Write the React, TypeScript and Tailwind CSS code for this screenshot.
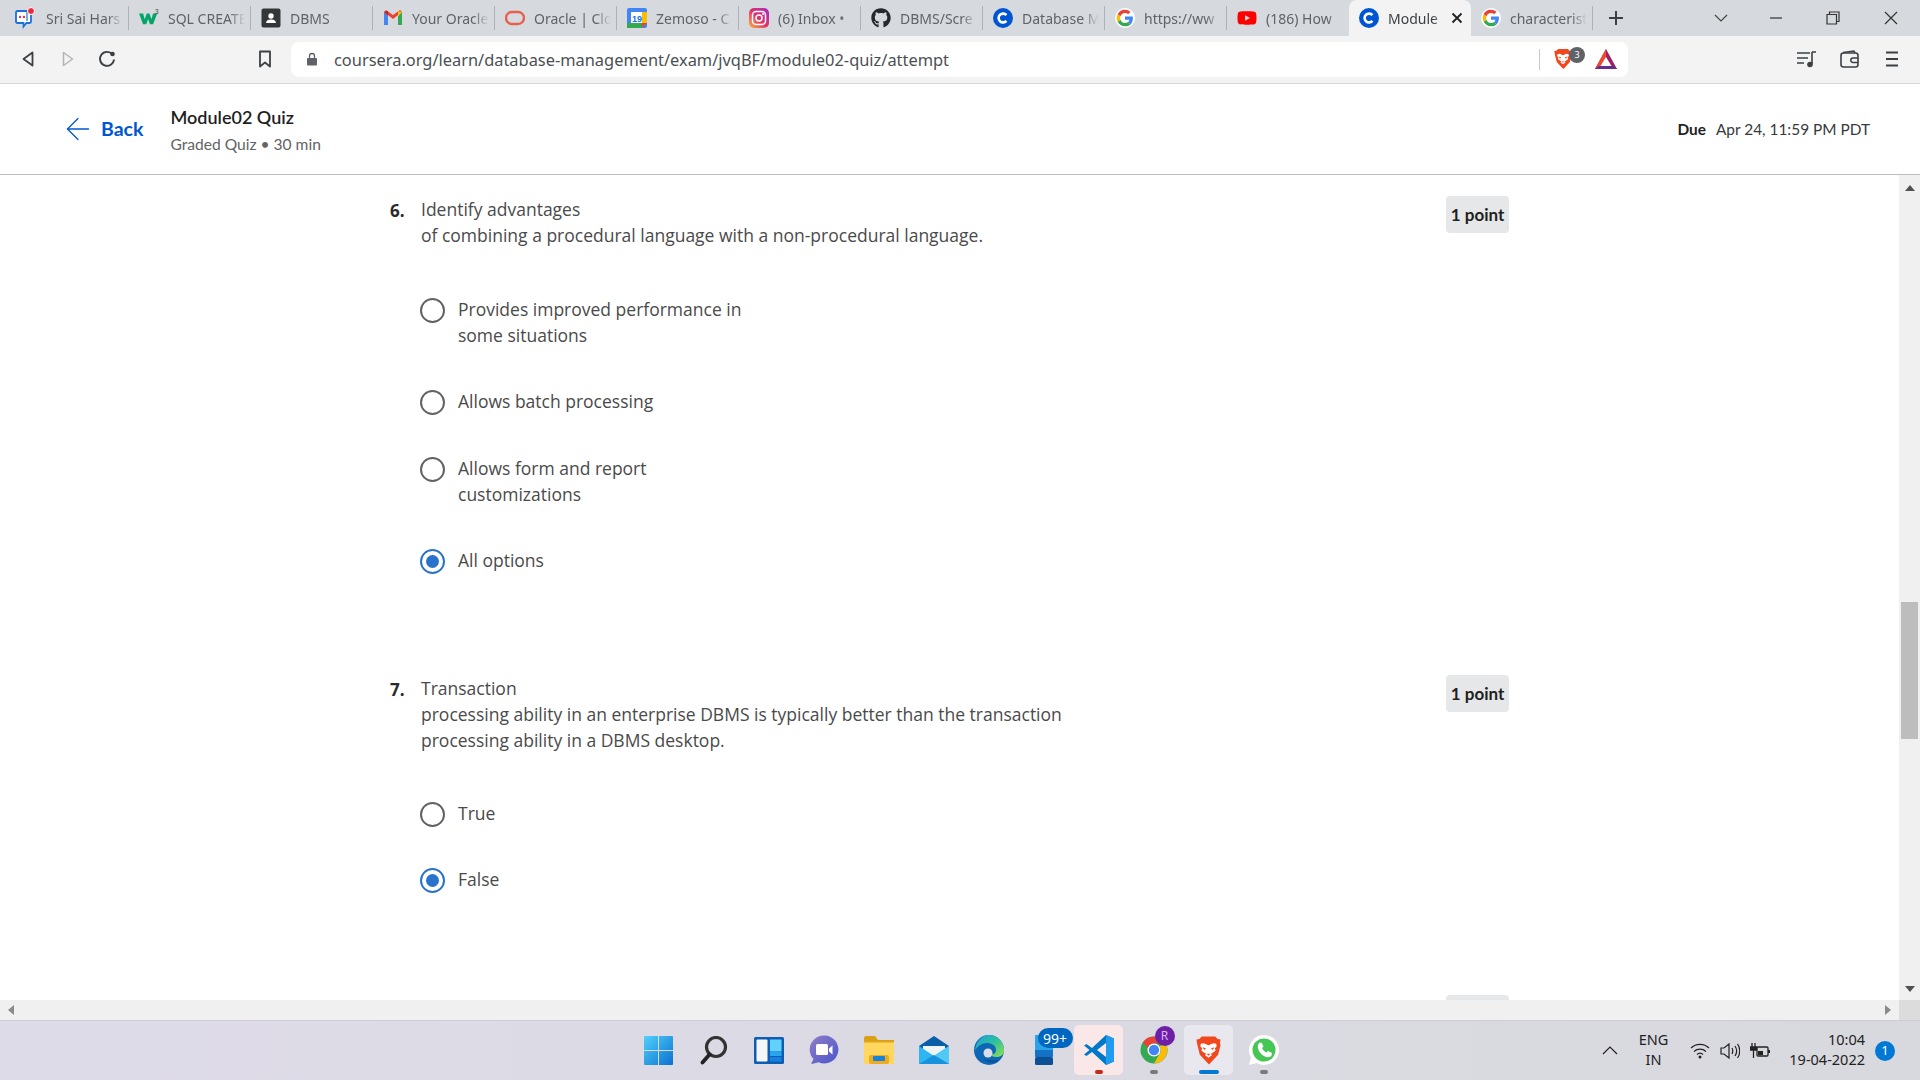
import React from "react";
import { FaGithub, FaYoutube } from "react-icons/fa";
import { FiArrowLeft } from "react-icons/fi";

const Coursera = () => (
  <svg width="20" height="20" viewBox="0 0 20 20"><circle cx="10" cy="10" r="10" fill="#0056d2" /><path d="M13.400 7.200A4.400 4.400 0 1 0 13.400 12.800" fill="none" stroke="#fff" strokeWidth="2.600" /></svg>
);
const Google = () => (
  <svg width="20" height="20" viewBox="0 0 48 48"><circle cx="24" cy="24" r="24" fill="#fff" /><path fill="#4285F4" d="M43 24.500c0-1.500-.1-2.900-.4-4.300H24v8.100h10.700c-.5 2.500-1.900 4.600-4 6l6.400 5c3.700-3.500 5.900-8.600 5.900-14.800z" /><path fill="#34A853" d="M24 44c5.400 0 9.900-1.800 13.100-4.700l-6.400-5c-1.800 1.200-4 1.900-6.700 1.900-5.100 0-9.500-3.500-11-8.100l-6.600 5.100C9.700 39.600 16.300 44 24 44z" /><path fill="#FBBC05" d="M13 28.100a12 12 0 0 1 0-8.200l-6.600-5.100a20 20 0 0 0 0 18.400z" /><path fill="#EA4335" d="M24 11.800c2.900 0 5.500 1 7.600 3l5.700-5.700A20 20 0 0 0 6.400 14.800l6.600 5.100c1.500-4.600 5.900-8.100 11-8.100z" /></svg>
);

const BraveIcon = ({ w, h }: { w: number; h: number }) => (
  <svg width={w} height={h} viewBox="0 0 26 30">
    <path d="M6 0.500h14l2.500 2.500 3 .5-.5 3.500 .5 2.500-2.500 10-9 9.500c-.4.300-.7.300-1 0l-9-9.500-2.500-10L1 7 .5 3.500l3-.5z" fill="#f1481d" />
    <path d="M13 9.500l5-2 3 .5.500 2.500-2 2.500 1 2-3.500 2.500-1.500 1 1 1.500-3.500 2.500-3.500-2.500 1-1.500-1.500-1-3.500-2.500 1-2-2-2.500L5 8l3-.5z" fill="#fff" />
    <path d="M7 11.500l3.500 1.500-2 1.500zM19 11.500l-3.500 1.500 2 1.500zM11 18.500h4l-2 2z" fill="#f1481d" />
  </svg>
);

const tabIcons: Record<string, React.ReactNode> = {
  chat: (
    <svg width="22" height="22" viewBox="0 0 22 22" className="-ml-[4px]">
      <path d="M2 5.500a1.500 1.500 0 0 1 1.500-1.500h12a1.500 1.500 0 0 1 1.500 1.500v9a1.500 1.500 0 0 1-1.500 1.500h-3l-3 3.500v-3.500h-6a1.500 1.500 0 0 1-1.500-1.500z" fill="#fff" stroke="#1a6fd8" strokeWidth="1.800" />
      <circle cx="6" cy="10" r="1.200" fill="#e8344a" /><circle cx="10" cy="10" r="1.200" fill="#e8344a" /><path d="M13 5v9" stroke="#1a6fd8" strokeWidth="1.200" />
      <circle cx="17" cy="4" r="3.500" fill="#ee2a3f" stroke="#fff" strokeWidth="1" />
    </svg>
  ),
  w3: (
    <svg width="22" height="20" viewBox="0 0 22 20"><path d="M0 5h4.500l1.800 6.500L8.500 5h3l2.200 6.500L15.500 5H20l-4.500 12H12l-2-6-2 6H4.500z" fill="#04a46b" /><text x="19.500" y="6" textAnchor="middle" fontSize="7" fontFamily="Liberation Sans" fill="#3c4043">3</text></svg>
  ),
  contact: (
    <svg width="20" height="20" viewBox="0 0 20 20"><rect x="0.500" y="0.500" width="19" height="19" rx="2" fill="#33373a" /><circle cx="10" cy="8" r="2.700" fill="#fff" /><path d="M5 15c.5-3 2.500-3.500 5-3.500s4.500.5 5 3.500z" fill="#fff" /></svg>
  ),
  gmail: (
    <svg width="20" height="20" viewBox="0 0 20 20"><path d="M1 4v13h4V8z" fill="#4285f4" /><path d="M15 8v9h4V4z" fill="#34a853" /><path d="M1 4l9 7 9-7-2-2-7 5-7-5-2 2z" fill="#ea4335" /><path d="M1 4l4 4V3z" fill="#c5221f" /><path d="M15 3v5l4-4z" fill="#fbbc04" /></svg>
  ),
  oracle: (
    <svg width="20" height="20" viewBox="0 0 20 20"><rect x="1" y="4" width="18" height="12" rx="6" fill="none" stroke="#e8604c" strokeWidth="2.400" /></svg>
  ),
  cal: (
    <svg width="20" height="20" viewBox="0 0 20 20"><rect x="0" y="0" width="20" height="20" rx="2" fill="#4285f4" /><rect x="4" y="4" width="12" height="12" fill="#fff" /><rect x="0" y="15" width="15" height="5" fill="#34a853" /><rect x="15" y="4" width="5" height="11" fill="#fbbc04" /><path d="M15 15h5l-5 5z" fill="#ea4335" /><text x="10" y="13.500" textAnchor="middle" fontSize="9" fontFamily="Liberation Sans" fill="#1a73e8" fontWeight="700">19</text></svg>
  ),
  insta: (
    <svg width="20" height="20" viewBox="0 0 20 20"><defs><linearGradient id="ig" x1="0" y1="1" x2="1" y2="0"><stop offset="0" stopColor="#fdb33b" /><stop offset=".5" stopColor="#e1306c" /><stop offset="1" stopColor="#a02dc8" /></linearGradient></defs><rect width="20" height="20" rx="5" fill="url(#ig)" /><rect x="3.500" y="3.500" width="13" height="13" rx="3.500" fill="none" stroke="#fff" strokeWidth="1.500" /><circle cx="10" cy="10" r="3" fill="none" stroke="#fff" strokeWidth="1.500" /><circle cx="14" cy="6" r="1" fill="#fff" /></svg>
  ),
  github: <FaGithub size={20} color="#24292e" />,
  coursera: <Coursera />,
  google: <Google />,
  yt: <FaYoutube size={22} color="#f00" />,
};

const tabs = [
  ["chat", "Sri Sai Hars"],
  ["w3", "SQL CREATE"],
  ["contact", "DBMS"],
  ["gmail", "Your Oracle"],
  ["oracle", "Oracle | Clo"],
  ["cal", "Zemoso - C"],
  ["insta", "(6) Inbox •"],
  ["github", "DBMS/Scre"],
  ["coursera", "Database M"],
  ["google", "https://ww"],
  ["yt", "(186) How"],
  ["coursera", "Module"],
  ["google", "characterist"],
];

const sysFont = "font-['Noto_Sans','Open_Sans',sans-serif]";
const quizFont = "font-['Open_Sans','Noto_Sans',sans-serif]";
const headFont = "font-['Lato','Open_Sans',sans-serif]";

function TabStrip() {
  return (
    <div className="flex h-[36px] items-stretch bg-[#d6dade] pl-[7px]">
      {tabs.map(([icon, label], i) => {
        const active = i === 11;
        return (
          <div key={i} className={`relative flex w-[122px] shrink-0 items-center pl-[10px] ${active ? "rounded-t-[8px] bg-[#f3f3f3] pr-[8px]" : "pr-[6px]"}`}>
            <div className="flex w-[20px] shrink-0 items-center justify-center">{tabIcons[icon]}</div>
            <div className={`ml-[9px] flex-1 overflow-hidden whitespace-nowrap text-[14px] [mask-image:linear-gradient(to_right,#000_80%,transparent)] ${sysFont} ${active ? "text-[#3c4043]" : "text-[#5f6368]"}`}>{label}</div>
            {active && (
              <svg width="12" height="12" viewBox="0 0 12 12" className="ml-[6px] shrink-0"><path d="M1.500 1.500l9 9M10.500 1.500l-9 9" stroke="#202124" strokeWidth="1.800" /></svg>
            )}
            {!active && i !== 10 && <div className="absolute right-0 top-[6px] h-[24px] w-px bg-[#aeb2b6]" />}
          </div>
        );
      })}
      <div className="ml-[10px] flex w-[26px] items-center justify-center">
        <svg width="16" height="16" viewBox="0 0 16 16"><path d="M8 1v14M1 8h14" stroke="#3c4043" strokeWidth="2" /></svg>
      </div>
      <div className="ml-auto flex items-center">
        <svg width="14" height="8" viewBox="0 0 14 8" className="mr-[42px]"><path d="M1 1l6 6 6-6" fill="none" stroke="#444" strokeWidth="1.200" /></svg>
        <svg width="12" height="2" viewBox="0 0 12 2" className="mr-[44px]"><path d="M0 1h12" stroke="#333" strokeWidth="1.200" /></svg>
        <svg width="14" height="14" viewBox="0 0 14 14" className="mr-[44px]"><path d="M1 3.500h9.500V13H1zM3.500 3.500V1H13v9.500h-2.500" fill="none" stroke="#333" strokeWidth="1.200" /></svg>
        <svg width="14" height="14" viewBox="0 0 14 14" className="mr-[22px]"><path d="M1 1l12 12M13 1L1 13" stroke="#333" strokeWidth="1.200" /></svg>
      </div>
    </div>
  );
}

function Toolbar() {
  return (
    <div className="flex h-[48px] items-center border-b border-[#d6d6d6] bg-[#f3f3f3] pb-[1px]">
      <div className="flex w-[291px] shrink-0 items-center">
        <svg width="12" height="16" viewBox="0 0 12 16" className="ml-[22px]"><path d="M10.500 1.500v13L1.500 8z" fill="none" stroke="#3c4043" strokeWidth="1.800" strokeLinejoin="round" /></svg>
        <svg width="12" height="16" viewBox="0 0 12 16" className="ml-[28px]"><path d="M1.500 1.500v13l9-6.500z" fill="none" stroke="#b5b5b5" strokeWidth="1.500" strokeLinejoin="round" /></svg>
        <svg width="18" height="18" viewBox="0 0 18 18" className="ml-[24px]"><path d="M14.500 4.500A7 7 0 1 0 16 9.500" fill="none" stroke="#3c4043" strokeWidth="1.900" /><circle cx="14.500" cy="4" r="2.300" fill="#3c4043" /></svg>
        <svg width="14" height="18" viewBox="0 0 14 18" className="ml-[142px]"><path d="M2 1.500h10v15l-5-4-5 4z" fill="none" stroke="#3c4043" strokeWidth="1.800" strokeLinejoin="round" /></svg>
      </div>
      <div className="flex h-[35px] w-[1337px] items-center rounded-[8px] bg-white pl-[15px]">
        <svg width="12" height="14" viewBox="0 0 12 14"><rect x="1" y="6" width="10" height="7.500" rx="1" fill="#5f6368" /><path d="M3.500 6V4a2.500 2.500 0 0 1 5 0v2" fill="none" stroke="#5f6368" strokeWidth="1.300" /></svg>
        <div className={`ml-[16px] pt-[3px] text-[16.400px] text-[#4b4f53] ${sysFont}`}>coursera.org/learn/database-management/exam/jvqBF/module02-quiz/attempt</div>
        <div className="ml-auto h-[21px] w-px bg-[#c9c9c9]" />
        <div className="relative ml-[14px] flex w-[18px]">
          <BraveIcon w={18} h={22} />
          <span className="absolute -top-[1px] left-[15px] flex h-[16px] w-[16px] items-center justify-center rounded-full bg-[#5f6368] text-[9px] text-white">3</span>
        </div>
        <svg width="22" height="20" viewBox="0 0 22 20" className="ml-[23px] mr-[11px]"><path d="M11 0L22 20H0z" fill="#9e1f63" /><path d="M11 0L0 20h6L11 9z" fill="#ef4a2b" /><path d="M11 8l5.500 9H5.500z" fill="#fff" /><path d="M0 20l3.500-3h15l3.500 3z" fill="#662d91" /></svg>
      </div>
      <div className="flex flex-1 items-center justify-end">
        <svg width="19" height="18" viewBox="0 0 19 18" className="mr-[24px]"><path d="M0 3h13M0 8h11M0 13h7" stroke="#3c4043" strokeWidth="1.600" /><path d="M15 2v12M15 2h4" stroke="#3c4043" strokeWidth="1.600" /><circle cx="13" cy="14.500" r="2.800" fill="#3c4043" /></svg>
        <svg width="19" height="18" viewBox="0 0 19 18" className="mr-[27px]"><rect x="1" y="3" width="17" height="14" rx="2.500" fill="none" stroke="#3c4043" strokeWidth="1.600" /><path d="M18 8h-5a2 2 0 0 0 0 4.500h5" fill="none" stroke="#3c4043" strokeWidth="1.500" /><path d="M3 2.500l11-1.500 1 2" fill="none" stroke="#3c4043" strokeWidth="1.500" /></svg>
        <svg width="12" height="16" viewBox="0 0 12 16" className="mr-[22px]"><path d="M0 1.500h12M0 8h12M0 14.500h12" stroke="#3c4043" strokeWidth="1.800" /></svg>
      </div>
    </div>
  );
}

function QuizHeader() {
  return (
    <div className={`flex h-[91px] items-center border-b border-[#bdbdbd] bg-white pl-[60px] pr-[50px] ${headFont}`}>
      <FiArrowLeft size={36} color="#0056d2" strokeWidth={0.850} className="shrink-0" />
      <span className="ml-[5px] text-[19.500px] font-bold text-[#0056d2]">Back</span>
      <div className="ml-[27px] pt-[2px]">
        <div className="text-[18px] font-semibold leading-[24px] text-[#1f1f1f]">Module02 Quiz</div>
        <div className="mt-[3px] text-[15.600px] leading-[24px] text-[#636363]">Graded Quiz • 30 min</div>
      </div>
      <div className="ml-auto pt-[2px] text-[15.400px] text-[#373a3c]"><span className="mr-[10px] font-bold text-[#1f1f1f]">Due</span>Apr 24, 11:59 PM PDT</div>
    </div>
  );
}

const Radio = ({ on }: { on?: boolean }) =>
  on ? (
    <span className="flex h-[25px] w-[25px] shrink-0 items-center justify-center rounded-full border-[2.500px] border-[#2a73cc]"><span className="h-[13px] w-[13px] rounded-full bg-[#2a73cc]" /></span>
  ) : (
    <span className="h-[25px] w-[25px] shrink-0 rounded-full border-[2.500px] border-[#636363]" />
  );

function Option({ lines, on, mt }: { lines: string[]; on?: boolean; mt: string }) {
  return (
    <div className={`flex items-start ${mt}`}>
      <Radio on={on} />
      <div className="ml-[13px] -mt-[2px] text-[17.500px] leading-[26px] text-[#4a4a4a]">
        {lines.map((l) => <div key={l}>{l}</div>)}
      </div>
    </div>
  );
}

function Badge() {
  return <div className={`flex h-[37px] w-[63px] items-center justify-center rounded-[4px] bg-[#e5e7e8] text-[17px] font-bold text-[#1f1f1f] ${headFont}`}>1 point</div>;
}

function Question({ n, lines, className }: { n: string; lines: string[]; className: string }) {
  return (
    <div className={`flex items-start ${className}`}>
      <div className="w-[31px] pt-[2px] text-[17px] font-bold leading-[26px] text-[#2a2a2a]">{n}</div>
      <div className="w-[1025px] text-[17.500px] leading-[26px] text-[#4a4a4a]">
        {lines.map((l) => <div key={l}>{l}</div>)}
      </div>
      <Badge />
    </div>
  );
}

function Content() {
  return (
    <div className="flex min-h-0 flex-1">
      <div className={`relative min-w-0 flex-1 overflow-hidden bg-white pl-[390px] ${quizFont}`}>
        <Question n="6." className="mt-[21px]" lines={["Identify advantages", "of combining a procedural language with a non-procedural language."]} />
        <div className="pl-[30px]">
          <Option mt="mt-[50px]" lines={["Provides improved performance in", "some situations"]} />
          <Option mt="mt-[42px]" lines={["Allows batch processing"]} />
          <Option mt="mt-[42px]" lines={["Allows form and report", "customizations"]} />
          <Option mt="mt-[42px]" on lines={["All options"]} />
        </div>
        <Question n="7." className="mt-[101px]" lines={["Transaction", "processing ability in an enterprise DBMS is typically better than the transaction", "processing ability in a DBMS desktop."]} />
        <div className="pl-[30px]">
          <Option mt="mt-[49px]" lines={["True"]} />
          <Option mt="mt-[41px]" on lines={["False"]} />
        </div>
        <div className="absolute bottom-0 left-[1446px] h-[5px] w-[63px] rounded-t-[4px] bg-[#e5e7e8]" />
      </div>
      <div className="flex w-[21px] shrink-0 flex-col items-center bg-[#f0f0f0]">
        <svg width="10" height="6" viewBox="0 0 10 6" className="mt-[10px]"><path d="M5 0l5 6H0z" fill="#505050" /></svg>
        <div className="mr-[2px] mt-[411px] h-[137px] w-[17px] self-end bg-[#bdbdbd]" />
        <svg width="10" height="6" viewBox="0 0 10 6" className="mb-[8px] mt-auto"><path d="M5 6L0 0h10z" fill="#505050" /></svg>
      </div>
    </div>
  );
}

function HScroll() {
  return (
    <div className="flex h-[20px] shrink-0 items-center bg-[#f0f0f0]">
      <svg width="6" height="10" viewBox="0 0 6 10" className="ml-[8px]"><path d="M0 5l6-5v10z" fill="#8a8a8a" /></svg>
      <svg width="6" height="10" viewBox="0 0 6 10" className="ml-auto mr-[8px]"><path d="M6 5L0 0v10z" fill="#8a8a8a" /></svg>
      <div className="h-full w-[21px] bg-[#dcdcdc]" />
    </div>
  );
}

const Slot = ({ children, hl }: { children: React.ReactNode; hl?: string }) => (
  <div className="relative flex h-[50px] w-[55px] items-center justify-center">
    {hl && <div className={`absolute inset-y-0 left-[3px] right-[3px] rounded-[5px] ${hl}`} />}
    <div className="relative flex items-center justify-center">{children}</div>
  </div>
);

function Taskbar() {
  return (
    <div className={`relative flex h-[60px] shrink-0 items-center justify-center border-t border-[#cfccd8] bg-gradient-to-r from-[#dedbe8] to-[#d8d9de] pb-[1px] pl-[2px] ${sysFont}`}>
      <div className="flex items-center">
        <Slot>
          <svg width="29" height="29" viewBox="0 0 30 30"><defs><linearGradient id="wn" x1="0" y1="0" x2="1" y2="1"><stop offset="0" stopColor="#52d0fb" /><stop offset="1" stopColor="#0a70cf" /></linearGradient></defs><path d="M1 0h13.500v14.500H0V1a1 1 0 0 1 1-1zM15.500 0H29a1 1 0 0 1 1 1v13.500H15.500zM0 15.500h14.500V30H1a1 1 0 0 1-1-1zM15.500 15.500H30V29a1 1 0 0 1-1 1H15.500z" fill="url(#wn)" /></svg>
        </Slot>
        <Slot>
          <svg width="28" height="29" viewBox="0 0 28 29"><circle cx="16" cy="11" r="9.500" fill="none" stroke="#333" strokeWidth="3.200" /><path d="M9.500 18.500l-7 8" stroke="#222" strokeWidth="3.800" strokeLinecap="round" /></svg>
        </Slot>
        <Slot>
          <svg width="30" height="27" viewBox="0 0 30 27"><rect width="30" height="27" rx="1.500" fill="#0f5db3" /><rect x="2.500" y="2.500" width="11" height="22" rx="1" fill="#f4f6f8" /><rect x="16" y="2.500" width="11.500" height="12" fill="#61d2fb" /><rect x="16" y="15" width="11.500" height="4" fill="#2aa4ee" /><rect x="16" y="20" width="11.500" height="4.500" fill="#1583dd" /></svg>
        </Slot>
        <Slot>
          <svg width="30" height="30" viewBox="0 0 30 30"><defs><linearGradient id="tm" x1="0" y1="0" x2="1" y2="1"><stop offset="0" stopColor="#8f7ec6" /><stop offset="1" stopColor="#4a55cc" /></linearGradient></defs><path d="M15.500 0.500a14 14 0 1 1-6 26.700L3 29c-.6.100-.8-.4-.5-.9l2-4A14 14 0 0 1 15.500 .5z" fill="url(#tm)" /><rect x="7" y="9" width="12" height="11" rx="1.500" fill="#fff" /><path d="M20 13.500l3.500-3v9l-3.500-3z" fill="#fff" /></svg>
        </Slot>
        <Slot>
          <svg width="30" height="28" viewBox="0 0 30 28"><path d="M0 2a2 2 0 0 1 2-2h9l3 4h16v3H0z" fill="#d9a116" /><path d="M0 5h30v23H0z" fill="#ffd75e" /><path d="M0 5h30v1.500H0z" fill="#e0a41a" /><rect x="5" y="19" width="20" height="9" rx="2" fill="#f0ab1d" /><rect x="9" y="20" width="12" height="5" rx="1" fill="#1583dd" /></svg>
        </Slot>
        <Slot>
          <svg width="30" height="28" viewBox="0 0 30 28"><path d="M0 10L15 0l15 10v18H0z" fill="#0a5ea8" /><path d="M4 10h22v6l-11 7-11-7z" fill="#eef3f7" /><path d="M0 10l15 10 15-10v18H0z" fill="#2eb6f0" /><path d="M30 10v18L15 20z" fill="#51c8f5" /><path d="M0 28l15-9 15 9z" fill="#1792de" /></svg>
        </Slot>
        <Slot>
          <svg width="30" height="30" viewBox="0 0 30 30"><defs><linearGradient id="ed" x1="0" y1="0" x2="1" y2="1"><stop offset="0" stopColor="#1b9de2" /><stop offset=".5" stopColor="#2fc19b" /><stop offset="1" stopColor="#93e04f" /></linearGradient></defs><circle cx="15" cy="15" r="15" fill="#0e67b4" /><path d="M15 0a15 15 0 0 1 15 16c0 4-4 6-8 6-3 0-5-1-6-3 4 1 6-1 6-4 0-5-5-7-9-7-5 0-10 3-12 8C2 6 8 0 15 0z" fill="url(#ed)" /><circle cx="14" cy="18" r="4.500" fill="#dedbe8" /><path d="M9 24c4 4 11 5 16 1-5 1-12 0-16-1z" fill="#0a4f95" /></svg>
        </Slot>
        <Slot>
          <svg width="18" height="30" viewBox="0 0 18 30"><rect width="18" height="15" fill="#2aa3e8" /><rect y="15" width="18" height="7" fill="#1472c4" /><rect y="22" width="18" height="8" rx="1.500" fill="#0d4f94" /></svg>
          <span className="absolute left-[3px] top-[-7px] flex h-[20px] w-[35px] items-center justify-center rounded-full bg-[#0067c0] text-[14px] text-white">99+</span>
        </Slot>
        <Slot hl="bg-[#fae8e8]">
          <svg width="30" height="30" viewBox="0 0 30 30"><path d="M22 0l8 3.500v23L22 30 8 17l-5.500 4L0 19.500 5.500 15 0 10.500 2.500 9 8 13z" fill="#0078c8" /><path d="M22 8v14l-9-7z" fill="#fae8e8" /><path d="M22 0l8 3.500v23L22 30z" fill="#1f9cf0" /></svg>
          <span className="absolute -bottom-[9px] h-[4px] w-[8px] rounded-full bg-[#c42b1c]" />
        </Slot>
        <Slot>
          <svg width="28" height="28" viewBox="0 0 30 30"><circle cx="15" cy="15" r="14.500" fill="#34a853" /><path d="M15 .5a14.500 14.500 0 0 1 12.500 7.500H15a7 7 0 0 0-6.500 4.500L3 7A14.500 14.500 0 0 1 15 .5z" fill="#ea4335" /><path d="M27.500 8a14.500 14.500 0 0 1-12.500 21.500l6-10.500a7 7 0 0 0 0-8z" fill="#fbbc05" /><circle cx="15" cy="15" r="7" fill="#fff" /><circle cx="15" cy="15" r="5.500" fill="#4285f4" /></svg>
          <span className="absolute left-[15px] top-[-10px] flex h-[20px] w-[20px] items-center justify-center rounded-full bg-[#6f1ea8] text-[12px] text-[#d5b8e8]">R</span>
          <span className="absolute -bottom-[10px] h-[4px] w-[8px] rounded-full bg-[#7a7a7a]" />
        </Slot>
        <Slot hl="bg-[#e9e8ef]">
          <BraveIcon w={25} h={29} />
          <span className="absolute -bottom-[9px] h-[4px] w-[20px] rounded-full bg-[#0078d4]" />
        </Slot>
        <Slot>
          <svg width="30" height="30" viewBox="0 0 30 30"><path d="M15 0a15 15 0 1 1-7.500 28L0 30l2-7.500A15 15 0 0 1 15 0z" fill="#fff" /><circle cx="15" cy="15" r="11.500" fill="#45c655" /><path d="M10 8l2.500-.5 2 4-1.500 1.500c1 2 2.500 3.500 4.500 4.500L19 16l4 2-.5 2.500c-1 1.500-3 2-5 1.500-4-1-8-5-8.500-9-.5-2 0-3.500 1-5z" fill="#fff" /></svg>
          <span className="absolute -bottom-[9px] h-[4px] w-[8px] rounded-full bg-[#7a7a7a]" />
        </Slot>
      </div>
      <div className="absolute inset-y-0 right-[25px] flex items-center text-[#222]">
        <svg width="16" height="9" viewBox="0 0 16 9" className="mr-[21px]"><path d="M1 8l7-7 7 7" fill="none" stroke="#222" strokeWidth="1.200" /></svg>
        <div className="mr-[22px] -mt-[4px] text-center text-[14.500px] leading-[20px]"><div>ENG</div><div>IN</div></div>
        <svg width="20" height="16" viewBox="0 0 20 16" className="mr-[10px]"><path d="M1 5a13 13 0 0 1 18 0M4 8.500a9 9 0 0 1 12 0M7 11.500a4.500 4.500 0 0 1 6 0" fill="none" stroke="#222" strokeWidth="1.300" /><circle cx="10" cy="14" r="1.500" fill="#222" /></svg>
        <svg width="20" height="18" viewBox="0 0 20 18" className="mr-[10px]"><path d="M1 6h3l5-4v14l-5-4H1zM12 6c1 2 1 4 0 6M15 4c2 3 2 7 0 10M17.500 2c3 4 3 10 0 14" fill="none" stroke="#222" strokeWidth="1.200" /></svg>
        <svg width="20" height="16" viewBox="0 0 20 16" className="mr-[19px]"><path d="M2 0v4M5 0v4M0.500 4h6v3H.5zM3.500 7v8" stroke="#222" strokeWidth="1.300" fill="#222" /><rect x="7" y="4" width="11" height="9" rx="1" fill="none" stroke="#222" strokeWidth="1.300" /><rect x="8" y="8" width="5" height="4" fill="#222" /><rect x="18" y="7" width="2" height="3" fill="#222" /></svg>
        <div className="-mt-[4px] text-right text-[14.500px] leading-[20px]"><div>10:04</div><div>19-04-2022</div></div>
        <span className="ml-[10px] flex h-[20px] w-[20px] items-center justify-center rounded-full bg-[#0078d4] text-[13px] text-white">1</span>
      </div>
    </div>
  );
}

export default function App() {
  return (
    <div className="flex h-[1080px] w-[1920px] flex-col overflow-hidden bg-white">
      <TabStrip />
      <Toolbar />
      <QuizHeader />
      <Content />
      <HScroll />
      <Taskbar />
    </div>
  );
}
